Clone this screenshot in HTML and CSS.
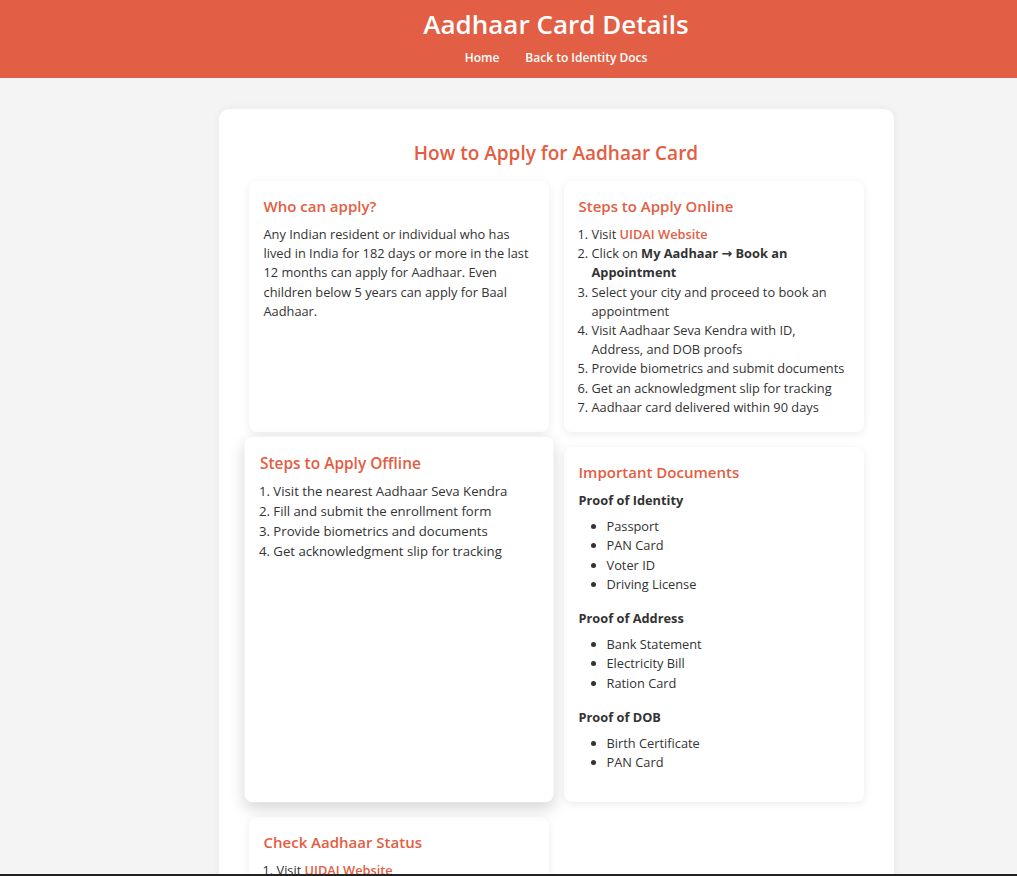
FILE: index.html
```html
<!DOCTYPE html>
<html lang="en">
<head>
<meta charset="UTF-8">
<title>Aadhaar Card Details</title>
<link rel="stylesheet" href="styles.css">
</head>
<body>
<div class="page">
  <header class="site-header">
    <h1 class="site-title">Aadhaar Card Details</h1>
    <nav class="site-nav">
      <a href="#" class="nav-link">Home</a>
      <a href="#" class="nav-link">Back to Identity Docs</a>
    </nav>
  </header>

  <main class="container">
    <h2 class="section-title">How to Apply for Aadhaar Card</h2>
    <div class="card-grid">
      <section class="card">
        <h3 class="card-title">Who can apply?</h3>
        <p class="card-text">Any Indian resident or individual who has lived in India for 182 days or more in the last 12 months can apply for Aadhaar. Even children below 5 years can apply for Baal Aadhaar.</p>
      </section>

      <section class="card">
        <h3 class="card-title">Steps to Apply Online</h3>
        <ol class="steps">
          <li>Visit <a href="#" class="text-link">UIDAI Website</a></li>
          <li>Click on <strong>My Aadhaar → Book an Appointment</strong></li>
          <li>Select your city and proceed to book an appointment</li>
          <li>Visit Aadhaar Seva Kendra with ID, Address, and DOB proofs</li>
          <li>Provide biometrics and submit documents</li>
          <li>Get an acknowledgment slip for tracking</li>
          <li>Aadhaar card delivered within 90 days</li>
        </ol>
      </section>

      <section class="card card-hover">
        <h3 class="card-title">Steps to Apply Offline</h3>
        <ol class="steps">
          <li>Visit the nearest Aadhaar Seva Kendra</li>
          <li>Fill and submit the enrollment form</li>
          <li>Provide biometrics and documents</li>
          <li>Get acknowledgment slip for tracking</li>
        </ol>
      </section>

      <section class="card">
        <h3 class="card-title">Important Documents</h3>
        <h4 class="doc-title">Proof of Identity</h4>
        <ul class="doc-list">
          <li>Passport</li>
          <li>PAN Card</li>
          <li>Voter ID</li>
          <li>Driving License</li>
        </ul>
        <h4 class="doc-title">Proof of Address</h4>
        <ul class="doc-list">
          <li>Bank Statement</li>
          <li>Electricity Bill</li>
          <li>Ration Card</li>
        </ul>
        <h4 class="doc-title">Proof of DOB</h4>
        <ul class="doc-list">
          <li>Birth Certificate</li>
          <li>PAN Card</li>
        </ul>
      </section>

      <section class="card">
        <h3 class="card-title">Check Aadhaar Status</h3>
        <ol class="steps">
          <li>Visit <a href="#" class="text-link">UIDAI Website</a></li>
          <li>Click on <strong>Check Enrolment &amp; Update Status</strong></li>
          <li>Enter your Enrolment ID and captcha</li>
          <li>View your Aadhaar status</li>
        </ol>
      </section>
    </div>
  </main>
</div>
<div class="bottom-bar"></div>
</body>
</html>
```

FILE: styles.css
```css
html {
  overflow-x: hidden;
}

body {
  margin: 0;
  background: #f4f4f4;
  color: #333333;
  font-family: "Open Sans", "DejaVu Sans", sans-serif;
}

.page {
  width: 1112px;
}

.site-header {
  background: #e25f45;
  color: #ffffff;
  text-align: center;
  padding: 7px 0 11px;
}

.site-title {
  margin: 0 0 8px;
  font-size: 26px;
  line-height: 34px;
  font-weight: 600;
}

.site-nav {
  display: flex;
  justify-content: center;
  gap: 26px;
}

.nav-link {
  color: #ffffff;
  text-decoration: none;
  font-size: 12px;
  line-height: 18px;
  font-weight: 600;
}

.container {
  width: 615px;
  margin: 31px auto 0;
  padding: 30px 30px 40px;
  background: #ffffff;
  border-radius: 10px;
  box-shadow: 0 0 10px rgba(0, 0, 0, 0.06);
}

.section-title {
  margin: 0 0 14px;
  text-align: center;
  color: #e35d42;
  font-size: 19px;
  line-height: 28px;
  font-weight: 600;
}

.card-grid {
  display: grid;
  grid-template-columns: 300px 300px;
  gap: 15px;
}

.card {
  background: #ffffff;
  border-radius: 8px;
  padding: 15px;
  box-shadow: 0 2px 8px rgba(0, 0, 0, 0.08);
}

.card-hover {
  transform: translateY(-5px) scale(1.03);
  box-shadow: 0 6px 16px rgba(0, 0, 0, 0.16);
}

.card-title {
  margin: 0 0 8px;
  color: #e35d42;
  font-size: 15px;
  line-height: 21px;
  font-weight: 600;
}

.card-text {
  margin: 0;
  font-size: 12.8px;
  line-height: 19.2px;
}

.steps {
  margin: 0;
  padding-left: 13px;
  font-size: 12.8px;
  line-height: 19.2px;
}

.text-link {
  color: #e35d42;
  font-weight: 600;
  text-decoration: none;
}

.steps strong {
  font-weight: 700;
}

.doc-title {
  margin: 0 0 7px;
  font-size: 12.8px;
  line-height: 19.2px;
  font-weight: 700;
}

.doc-list {
  margin: 0 0 15px;
  padding-left: 28px;
  font-size: 12.8px;
  line-height: 19.2px;
}

.bottom-bar {
  position: fixed;
  left: 0;
  right: 0;
  bottom: 0;
  height: 2px;
  background: #222222;
}
```
